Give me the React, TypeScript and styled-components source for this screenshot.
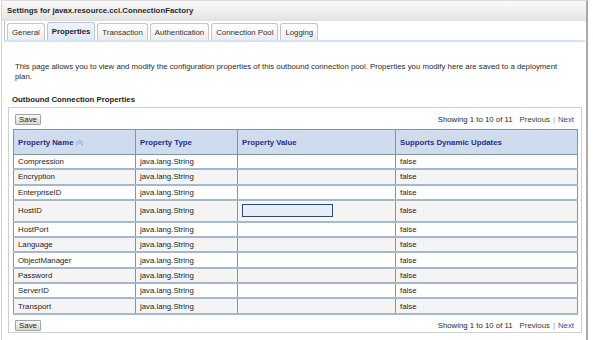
import styled, { createGlobalStyle } from 'styled-components';

const GlobalStyle = createGlobalStyle`
  body {
    margin: 0;
    background: #fff;
    font-family: Tahoma, 'Liberation Sans', Arial, sans-serif;
    font-size: 7.8px;
    color: #2a2a2a;
  }
`;

const Panel = styled.div`
  margin-left: 1px;
  width: 587px;
  min-height: 340px;
  box-sizing: border-box;
  border-left: 1px solid #d4d4d4;
  border-right: 2px solid #a9a9a9;
  border-top: 1px solid #dcdcdc;
`;

const TitleBar = styled.div`
  height: 19px;
  display: flex;
  align-items: center;
  padding-left: 5px;
  font-weight: bold;
  color: #2b2b2b;
  background: linear-gradient(#fafafa, #e4e4e4);
  border-bottom: 1px solid #e0e0e0;
`;

const TabStrip = styled.div`
  display: flex;
  align-items: flex-end;
  gap: 2px;
  height: 19px;
  margin: 0 1px 0 2px;
  padding-left: 2px;
  border-left: 1px solid #b3c5da;
  border-bottom: 2px solid #d6e2ee;
`;

const Tab = styled.div<{ $active?: boolean }>`
  height: ${({ $active }) => ($active ? '17px' : '16px')};
  display: flex;
  align-items: center;
  padding: 0 4px;
  border: 1px solid ${({ $active }) => ($active ? '#b2c6dc' : '#c6c6c6')};
  border-bottom: none;
  border-radius: 3px 3px 0 0;
  font-weight: ${({ $active }) => ($active ? 'bold' : 'normal')};
  color: ${({ $active }) => ($active ? '#1d1d1d' : '#333')};
  background: ${({ $active }) =>
    $active ? 'linear-gradient(#eef4fb, #dde8f5)' : 'linear-gradient(#ffffff, #ececec)'};
`;

const Intro = styled.p`
  margin: 20px 0 0 13px;
  width: 552px;
  line-height: 10px;
`;

const Heading = styled.div`
  margin: 13px 0 0 10px;
  line-height: 10px;
  font-weight: bold;
  color: #222;
`;

const Box = styled.div`
  margin: 2px 4px 0 6px;
  border: 1px solid #cfcfcf;
  padding: 6px 4px 1px;
`;

const Toolbar = styled.div<{ $bottom?: boolean }>`
  display: flex;
  align-items: center;
  justify-content: space-between;
  height: 11px;
  padding: 0 3px 0 2px;
  margin: ${({ $bottom }) => ($bottom ? '5px 0 0' : '0 0 4px')};
`;

const SaveButton = styled.button`
  height: 11px;
  width: 26px;
  padding: 0;
  font: inherit;
  color: #222;
  border: 1px solid #a3a3a3;
  border-radius: 1px;
  background: linear-gradient(#f8f8f8, #d9d9d9);
`;

const Pager = styled.div`
  display: flex;
  align-items: center;
  color: #2a2a2a;
`;

const PagerLink = styled.span<{ $active?: boolean }>`
  color: ${({ $active }) => ($active ? '#2d4f9e' : '#3a3a3a')};
`;

const Divider = styled.span`
  color: #9a9a9a;
  margin: 0 3px;
`;

const Table = styled.table`
  width: 564px;
  table-layout: fixed;
  border-collapse: collapse;
  border: 1px solid #7f93ad;
`;

const HeadCell = styled.th`
  height: 24px;
  padding: 0 4px;
  text-align: left;
  font-weight: bold;
  color: #1f2d8a;
  background: #cfdcee;
  border-right: 1px solid #7f93ad;
  border-bottom: 1px solid #7f93ad;
`;

const Row = styled.tr<{ $odd: boolean }>`
  background: ${({ $odd }) => ($odd ? '#f4f4f4' : '#ffffff')};
`;

const Cell = styled.td<{ $tall?: boolean }>`
  height: ${({ $tall }) => ($tall ? '20px' : '13.3px')};
  padding: 0 4px;
  color: #1c1c1c;
  border-right: 1px solid #7f93ad;
  border-bottom: 2px solid #a8b7ca;
`;

const ValueInput = styled.input`
  display: block;
  box-sizing: border-box;
  width: 91px;
  height: 13px;
  margin: 0;
  border: 1px solid #2d4a70;
  background: #e8eef9;
`;

const SortIcon = () => (
  <svg width="9" height="7" viewBox="0 0 9 7" style={{ marginLeft: 2, verticalAlign: -1 }}>
    <path d="M1 4 L4.5 1 L8 4 M1 6.5 L4.5 3.5 L8 6.5" fill="none" stroke="#8c9bb5" strokeWidth="0.9" />
  </svg>
);

const tabs = ['General', 'Properties', 'Transaction', 'Authentication', 'Connection Pool', 'Logging'];

const properties = [
  'Compression',
  'Encryption',
  'EnterpriseID',
  'HostID',
  'HostPort',
  'Language',
  'ObjectManager',
  'Password',
  'ServerID',
  'Transport',
];

const PagerBar = ({ bottom }: { bottom?: boolean }) => (
  <Toolbar $bottom={bottom}>
    <SaveButton>Save</SaveButton>
    <Pager>
      <span>Showing 1 to 10 of 11</span>
      <PagerLink style={{ marginLeft: 7 }}>Previous</PagerLink>
      <Divider>|</Divider>
      <PagerLink $active>Next</PagerLink>
    </Pager>
  </Toolbar>
);

const App = () => {
  return (
    <>
      <GlobalStyle />
      <Panel>
        <TitleBar>Settings for javax.resource.cci.ConnectionFactory</TitleBar>
        <TabStrip>
          {tabs.map((t) => (
            <Tab key={t} $active={t === 'Properties'}>
              {t}
            </Tab>
          ))}
        </TabStrip>
        <Intro>
          This page allows you to view and modify the configuration properties of this outbound
          connection pool. Properties you modify here are saved to a deployment plan.
        </Intro>
        <Heading>Outbound Connection Properties</Heading>
        <Box>
          <PagerBar />
          <Table>
            <colgroup>
              <col style={{ width: 122 }} />
              <col style={{ width: 102 }} />
              <col style={{ width: 158 }} />
              <col style={{ width: 182 }} />
            </colgroup>
            <thead>
              <tr>
                <HeadCell>
                  Property Name
                  <SortIcon />
                </HeadCell>
                <HeadCell>Property Type</HeadCell>
                <HeadCell>Property Value</HeadCell>
                <HeadCell>Supports Dynamic Updates</HeadCell>
              </tr>
            </thead>
            <tbody>
              {properties.map((name, i) => (
                <Row key={name} $odd={i % 2 === 1}>
                  <Cell $tall={name === 'HostID'}>{name}</Cell>
                  <Cell>java.lang.String</Cell>
                  <Cell>{name === 'HostID' && <ValueInput type="text" />}</Cell>
                  <Cell>false</Cell>
                </Row>
              ))}
            </tbody>
          </Table>
          <PagerBar bottom />
        </Box>
      </Panel>
    </>
  );
};

export default App;
